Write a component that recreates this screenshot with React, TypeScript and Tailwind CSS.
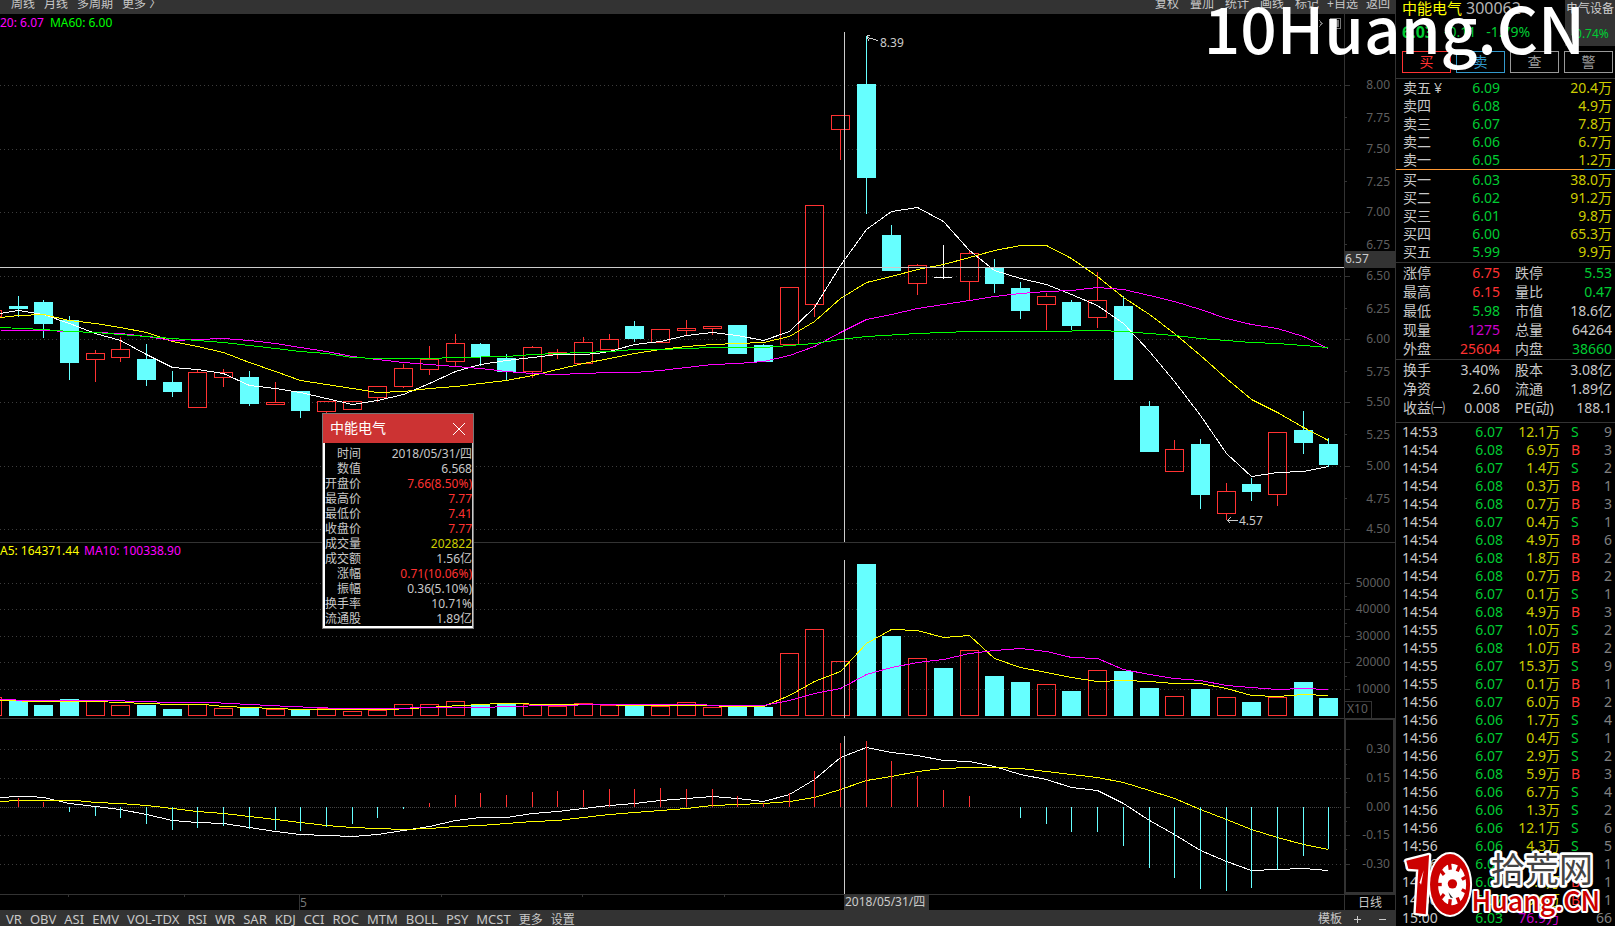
import React from "react";

type Tone = "white" | "green" | "red" | "yellow" | "magenta" | "gray";

const toneClass: Record<Tone, string> = {
  white: "text-[#c8c8c8]",
  green: "text-[#00cc33]",
  red: "text-[#ff3232]",
  yellow: "text-[#cccc00]",
  magenta: "text-[#cc00cc]",
  gray: "text-[#808080]",
};

const UP = "#ff3232";
const DOWN = "#66ffff";
const LINE = "#333333";
const CROSS = "#cccccc";

/* Horizontal centre of every trading day. */
const days = [
  18, 43, 69, 95, 120, 146, 172, 197, 223, 249, 275, 300, 326, 352, 377, 403, 429, 455, 480, 506, 532, 557, 583, 609,
  634, 660, 686, 712, 737, 763, 789, 814, 840, 866, 891, 917, 943, 969, 994, 1020, 1046, 1071, 1097, 1123, 1149, 1174,
  1200, 1226, 1251, 1277, 1303, 1328,
];

/* direction, wick top, body top, body bottom, wick bottom, volume top, histogram end */
type Day = ["u" | "d" | "n", number, number, number, number, number, number];
const data: Day[] = [
  ["d", 296, 306, 309, 317, 700, 798],
  ["d", 300, 302, 324, 338, 705, 802],
  ["d", 316, 320, 363, 380, 699, 812],
  ["u", 350, 353, 360, 382, 701, 816],
  ["u", 337, 349, 358, 362, 705, 818],
  ["d", 344, 359, 380, 386, 705, 824],
  ["d", 371, 382, 392, 397, 709, 830],
  ["u", 370, 372, 408, 408, 704, 828],
  ["u", 369, 372, 378, 387, 708, 826],
  ["d", 371, 377, 404, 406, 707, 829],
  ["u", 382, 402, 405, 405, 709, 830],
  ["d", 391, 391, 411, 418, 710, 831],
  ["u", 401, 401, 412, 413, 708, 827],
  ["u", 401, 401, 410, 410, 711, 824],
  ["u", 386, 386, 398, 402, 710, 818],
  ["u", 364, 368, 387, 388, 704, 809],
  ["u", 346, 359, 370, 375, 704, 803],
  ["u", 334, 343, 362, 366, 701, 795],
  ["d", 343, 344, 357, 366, 705, 793],
  ["d", 354, 358, 372, 380, 704, 795],
  ["u", 346, 347, 372, 378, 704, 792],
  ["u", 349, 352, 355, 359, 706, 791],
  ["u", 337, 342, 364, 364, 703, 790],
  ["u", 334, 339, 350, 350, 705, 789],
  ["d", 321, 326, 339, 342, 705, 789],
  ["u", 329, 329, 343, 343, 706, 788],
  ["u", 320, 328, 331, 335, 702, 789],
  ["u", 326, 326, 329, 335, 707, 789],
  ["d", 325, 325, 354, 354, 707, 796],
  ["d", 344, 345, 362, 362, 707, 803],
  ["u", 287, 287, 345, 345, 653, 793],
  ["u", 205, 205, 305, 317, 629, 771],
  ["u", 115, 115, 130, 160, 661, 743],
  ["d", 36, 84, 178, 214, 564, 741],
  ["d", 225, 235, 271, 271, 636, 761],
  ["u", 264, 265, 284, 295, 658, 776],
  ["n", 245, 277, 278, 279, 668, 790],
  ["u", 250, 253, 282, 300, 650, 796],
  ["d", 259, 267, 284, 293, 676, 807],
  ["d", 282, 288, 311, 319, 682, 818],
  ["u", 293, 296, 305, 330, 684, 824],
  ["d", 300, 302, 326, 330, 691, 832],
  ["u", 272, 300, 318, 328, 670, 832],
  ["d", 296, 306, 380, 380, 671, 846],
  ["d", 401, 406, 452, 452, 688, 868],
  ["u", 440, 449, 472, 472, 696, 878],
  ["d", 439, 444, 495, 509, 689, 889],
  ["u", 483, 491, 514, 520, 697, 891],
  ["d", 478, 484, 492, 501, 702, 888],
  ["u", 432, 432, 495, 506, 697, 870],
  ["d", 411, 430, 443, 454, 682, 856],
  ["d", 438, 444, 465, 467, 698, 849],
];

const ma5 =
  "0,313 18,310 43,314 69,323 95,333 120,340 146,354 172,367 197,369 223,373 249,385 275,388 300,392 326,398 352,404 377,400 403,394 429,383 455,371 480,364 506,360 532,357 557,354 583,354 596,353 609,351 634,344 660,341 686,335 712,332 737,335 763,340 789,331 814,307 840,265 866,229 891,211 917,207 943,221 969,250 994,270 1020,278 1046,284 1071,294 1097,305 1123,323 1149,351 1174,381 1200,415 1226,453 1251,476 1277,472 1303,471 1328,466";
const ma10 =
  "0,317 18,315 43,314 69,320 95,323 120,327 146,332 172,341 197,346 223,352 249,362 275,371 300,380 326,384 352,388 377,392 403,391 429,388 455,386 480,383 506,380 532,375 557,369 583,363 609,358 634,353 660,349 686,346 712,344 737,343 763,342 789,336 814,321 840,298 866,282 891,276 917,269 943,264 969,257 994,250 1020,245 1046,245 1071,258 1097,276 1123,297 1149,314 1174,333 1200,355 1226,378 1251,399 1277,412 1303,427 1328,440";
const ma20 =
  "0,330 43,330 69,331 95,332 120,333 146,336 172,340 197,339 223,338 249,340 275,343 300,347 326,351 352,356 377,359 403,362 429,364 455,366 480,368 506,371 532,373 557,374 583,373 609,372 634,372 660,370 686,367 712,364 737,363 763,361 789,355 814,346 840,332 866,319 891,314 917,308 943,304 969,300 994,296 1020,293 1046,291 1071,290 1097,287 1123,289 1149,295 1174,301 1200,309 1226,318 1251,324 1277,328 1303,336 1328,348";
const ma60 =
  "0,327 43,329 69,331 95,332 120,334 146,336 172,338 197,340 223,342 249,345 275,348 300,351 326,353 352,357 377,358 429,358 455,357 506,356 532,354 557,353 583,352 609,351 634,349 660,349 686,348 712,347 763,347 789,345 814,343 840,339 866,336 917,333 969,331 1046,331 1097,330 1123,331 1149,333 1174,335 1200,338 1226,340 1251,342 1277,343 1303,345 1328,347";
const vol5 =
  "0,700 43,701 95,701 146,703 172,704 204,704 223,706 249,707 300,709 389,709 429,707 442,706 480,704 500,703 557,704 596,704 634,705 700,705 737,706 763,706 789,695 814,681 840,671 866,643 891,629 917,630 943,637 969,635 994,658 1020,667 1046,672 1071,677 1097,681 1123,680 1149,681 1174,683 1200,683 1226,688 1251,695 1277,696 1303,694 1328,695";
const vol10 =
  "0,699 31,700 108,700 172,702 211,702 249,704 290,706 340,708 403,708 416,707 490,707 500,706 557,705 600,704 700,704 712,705 763,705 789,700 814,693 840,688 866,674 891,667 917,662 943,659 969,653 994,650 1020,648 1046,651 1071,657 1097,658 1123,669 1149,674 1174,678 1200,680 1226,685 1251,687 1277,689 1303,688 1328,689";
const dif =
  "0,797 18,796 30,796 43,797 69,803 95,806 120,809 146,814 172,820 197,822 223,823 249,827 275,831 300,834 326,835 352,836 377,834 403,830 429,826 455,820 480,817 506,817 532,813 557,811 583,808 609,805 634,803 660,800 686,798 712,796 737,798 763,801 789,794 814,779 840,757 866,747 891,752 917,755 943,760 969,761 994,766 1020,774 1046,779 1071,787 1097,790 1123,803 1149,820 1174,834 1200,850 1226,861 1251,870 1277,869 1303,868 1328,870";
const dea =
  "0,801 18,800 75,800 95,802 120,803 146,805 172,808 197,811 223,813 249,816 275,819 300,822 326,825 352,827 377,828 403,829 429,828 455,826 480,825 506,823 532,821 557,820 583,817 609,814 634,812 660,810 686,808 712,805 737,804 763,803 789,801 814,797 840,789 866,780 891,776 917,771 943,768 969,767 994,767 1020,768 1046,771 1071,774 1097,777 1123,782 1149,790 1174,798 1200,809 1226,819 1251,829 1277,837 1303,844 1328,849";

function Grid({ ys }: { ys: number[] }) {
  return (
    <>
      {ys.map((y) => (
        <line key={y} x1={0} x2={1342} y1={y + 0.5} y2={y + 0.5} stroke="#3c3c3c" strokeDasharray="1 3" />
      ))}
    </>
  );
}

function Curve({ points, color }: { points: string; color: string }) {
  return <polyline points={points} transform="translate(.5 .5)" fill="none" stroke={color} strokeWidth={1} />;
}

type ScaleLabel = [number, string];

function Axis({
  top,
  height,
  className,
  label,
  majors,
  minors,
  children,
}: {
  top: number;
  height: number;
  className: string;
  label: ScaleLabel[];
  majors: number[];
  minors: number[];
  children?: React.ReactNode;
}) {
  return (
    <svg
      className={`w-[51px] shrink-0 ${className}`}
      viewBox={`0 ${top} 51 ${height}`}
      preserveAspectRatio="xMinYMin slice"
      shapeRendering="crispEdges"
    >
      <rect x={0} y={top} width={1} height={height} fill={LINE} />
      {majors.map((y) => (
        <rect key={y} x={1} y={y} width={5} height={1} fill={LINE} />
      ))}
      {minors.map((y) => (
        <rect key={y} x={1} y={y} width={2} height={1} fill={LINE} />
      ))}
      {label.map(([y, t]) => (
        <text key={t} x={46} y={y + 4} textAnchor="end" fontSize={12} fill="#5f5f5f">
          {t}
        </text>
      ))}
      {children}
    </svg>
  );
}

function PriceChart() {
  return (
    <svg
      className="block h-[528px] min-w-0 flex-1"
      viewBox="0 14 1344 528"
      preserveAspectRatio="xMaxYMin slice"
      shapeRendering="crispEdges"
    >
      <Grid ys={[85, 149, 212, 276, 339, 402, 466, 529]} />
      <rect x={-8.5} y={310.5} width={10} height={6} fill="none" stroke={UP} />
      {data.map(([dir, hi, top, bottom, lo], i) => {
        const x = days[i];
        if (dir === "d")
          return (
            <g key={x} fill={DOWN}>
              <rect x={x} y={hi} width={1} height={lo - hi} />
              <rect x={x - 9} y={top} width={19} height={bottom - top} />
            </g>
          );
        if (dir === "n")
          return (
            <g key={x} fill="#ffffff">
              <rect x={x} y={hi} width={1} height={lo - hi} />
              <rect x={x - 9} y={top} width={18} height={1} />
            </g>
          );
        return (
          <g key={x} fill={UP}>
            <rect x={x} y={hi} width={1} height={top - hi} />
            <rect x={x} y={bottom} width={1} height={lo - bottom} />
            <rect x={x - 8.5} y={top + 0.5} width={18} height={bottom - top - 1} fill="none" stroke={UP} />
          </g>
        );
      })}
      <Curve points={ma5} color="#ffffff" />
      <Curve points={ma10} color="#ffff00" />
      <Curve points={ma20} color="#ff00ff" />
      <Curve points={ma60} color="#00ff00" />
      <rect x={0} y={267} width={1344} height={1} fill={CROSS} />
      <rect x={844} y={32} width={1} height={510} fill={CROSS} />
      <path d="M878 40.500L867.500 37.500M870 35.500H867.500V38.500L869 40.500" fill="none" stroke={CROSS} />
      <path d="M1238 520.500H1227M1230.500 517.500L1227.500 520.500L1230.500 523.500" fill="none" stroke={CROSS} />
      <g fontSize={12} fill="#cccccc">
        <text x={880} y={47}>
          8.39
        </text>
        <text x={1239} y={525}>
          4.57
        </text>
      </g>
      <g fill="none" stroke="#777777">
        <path d="M1330.500 18.500h10v10h-10z" />
        <path d="M1319 20l3 3.500-3 3.500" />
        <path d="M1335.500 20.500h3v6h-3z" fill="#777777" />
      </g>
    </svg>
  );
}

function VolumeChart() {
  return (
    <svg
      className="block h-[175px] min-w-0 flex-1"
      viewBox="0 543 1344 175"
      preserveAspectRatio="xMaxYMin slice"
      shapeRendering="crispEdges"
    >
      <Grid ys={[583, 609, 636, 662, 689]} />
      <rect x={-8.5} y={697.5} width={10} height={18} fill="none" stroke={UP} />
      {data.map(([dir, , , , , v], i) =>
        dir === "u" ? (
          <rect key={i} x={days[i] - 8.5} y={v + 0.5} width={18} height={715 - v} fill="none" stroke={UP} />
        ) : (
          <rect key={i} x={days[i] - 9} y={v} width={19} height={716 - v} fill={DOWN} />
        ),
      )}
      <Curve points={vol5} color="#ffff00" />
      <Curve points={vol10} color="#ff00ff" />
      <rect x={844} y={560} width={1} height={158} fill={CROSS} />
    </svg>
  );
}

function MacdChart() {
  return (
    <svg
      className="block h-[175px] min-w-0 flex-1"
      viewBox="0 719 1344 175"
      preserveAspectRatio="xMaxYMin slice"
      shapeRendering="crispEdges"
    >
      <Grid ys={[749, 778, 835, 864]} />
      <line x1={0} x2={1342} y1={807.5} y2={807.5} stroke="#444444" strokeDasharray="1 1" />
      <Curve points={dif} color="#ffffff" />
      <Curve points={dea} color="#ffff00" />
      {data.map(([, , , , , , h], i) => (
        <rect
          key={i}
          x={days[i]}
          y={Math.min(h, 807)}
          width={1}
          height={Math.abs(h - 807)}
          fill={h < 807 ? UP : DOWN}
        />
      ))}
      <rect x={844} y={736} width={1} height={158} fill={CROSS} />
    </svg>
  );
}

const quoteRows: [string, string, Tone][] = [
  ["时间", "2018/05/31/四", "white"],
  ["数值", "6.568", "white"],
  ["开盘价", "7.66(8.50%)", "red"],
  ["最高价", "7.77", "red"],
  ["最低价", "7.41", "red"],
  ["收盘价", "7.77", "red"],
  ["成交量", "202822", "yellow"],
  ["成交额", "1.56亿", "white"],
  ["涨幅", "0.71(10.06%)", "red"],
  ["振幅", "0.36(5.10%)", "white"],
  ["换手率", "10.71%", "white"],
  ["流通股", "1.89亿", "white"],
];

function DayPopup() {
  return (
    <section
      aria-label="中能电气"
      className="absolute top-[413px] left-[322px] z-10 w-[152px] border border-[#777777] bg-black"
    >
      <header className="flex h-[29px] items-center justify-between bg-[#cc3333] pr-2 pl-[7px] text-sm leading-7 text-white">
        <h2 className="-mt-px">中能电气</h2>
        <button aria-label="关闭" className="block">
          <svg className="block size-3" viewBox="0 0 12 12" stroke="#ffffff" fill="none">
            <path d="M0 0L12 12M12 0L0 12" />
          </svg>
        </button>
      </header>
      <div className="border-r border-b-2 border-l-2 border-r-[#cccccc] border-b-white border-l-white pt-[3px]">
        <table className="w-full table-fixed border-collapse text-xs leading-[15px]">
          <tbody>
            {quoteRows.map(([k, v, tone]) => (
              <tr key={k} className="h-[15px]">
                <th className="w-9 p-0 text-right font-normal whitespace-nowrap text-[#c8c8c8]">{k}</th>
                <td className={`p-0 text-right ${toneClass[tone]}`}>{v}</td>
              </tr>
            ))}
          </tbody>
        </table>
      </div>
    </section>
  );
}

const asks = [
  ["卖五", "6.09", "20.4万"],
  ["卖四", "6.08", "4.9万"],
  ["卖三", "6.07", "7.8万"],
  ["卖二", "6.06", "6.7万"],
  ["卖一", "6.05", "1.2万"],
];
const bids = [
  ["买一", "6.03", "38.0万"],
  ["买二", "6.02", "91.2万"],
  ["买三", "6.01", "9.8万"],
  ["买四", "6.00", "65.3万"],
  ["买五", "5.99", "9.9万"],
];

function Ladder({ rows, marked }: { rows: string[][]; marked?: string }) {
  return (
    <table className="w-full table-fixed border-collapse">
      <tbody>
        {rows.map(([k, p, v]) => (
          <tr key={k} className="h-[18px] leading-[18px]">
            <th className="w-[58px] p-0 pl-[7px] text-left font-normal whitespace-nowrap text-[#c8c8c8]">
              {k}
              {k === marked && <span className="ml-[3px]">¥</span>}
            </th>
            <td className="w-[46px] p-0 text-right text-[#00cc33]">{p}</td>
            <td className="p-0 pr-[3px] text-right text-[#cccc00]">{v}</td>
          </tr>
        ))}
      </tbody>
    </table>
  );
}

type StatRow = [string, string, Tone, string, string, Tone];
const statsA: StatRow[] = [
  ["涨停", "6.75", "red", "跌停", "5.53", "green"],
  ["最高", "6.15", "red", "量比", "0.47", "green"],
  ["最低", "5.98", "green", "市值", "18.6亿", "white"],
  ["现量", "1275", "magenta", "总量", "64264", "white"],
  ["外盘", "25604", "red", "内盘", "38660", "green"],
];
const statsB: StatRow[] = [
  ["换手", "3.40%", "white", "股本", "3.08亿", "white"],
  ["净资", "2.60", "white", "流通", "1.89亿", "white"],
  ["收益㈠", "0.008", "white", "PE(动)", "188.1", "white"],
];

function Stats({ rows }: { rows: StatRow[] }) {
  return (
    <table className="w-full table-fixed border-collapse">
      <tbody>
        {rows.map(([a, av, at, b, bv, bt]) => (
          <tr key={a} className="h-[19px] leading-[19px]">
            <th className="w-[52px] p-0 pl-[7px] text-left font-normal whitespace-nowrap text-[#c8c8c8]">{a}</th>
            <td className={`w-[52px] p-0 text-right ${toneClass[at]}`}>{av}</td>
            <th className="w-[58px] p-0 pl-[15px] text-left font-normal whitespace-nowrap text-[#c8c8c8]">{b}</th>
            <td className={`p-0 pr-[3px] text-right ${toneClass[bt]}`}>{bv}</td>
          </tr>
        ))}
      </tbody>
    </table>
  );
}

const ticks: [string, string, string, string, string][] = [
  ["14:53", "6.07", "12.1万", "S", "9"],
  ["14:54", "6.08", "6.9万", "B", "3"],
  ["14:54", "6.07", "1.4万", "S", "2"],
  ["14:54", "6.08", "0.3万", "B", "1"],
  ["14:54", "6.08", "0.7万", "B", "3"],
  ["14:54", "6.07", "0.4万", "S", "1"],
  ["14:54", "6.08", "4.9万", "B", "6"],
  ["14:54", "6.08", "1.8万", "B", "2"],
  ["14:54", "6.08", "0.7万", "B", "2"],
  ["14:54", "6.07", "0.1万", "S", "1"],
  ["14:54", "6.08", "4.9万", "B", "3"],
  ["14:55", "6.07", "1.0万", "S", "2"],
  ["14:55", "6.08", "1.0万", "B", "2"],
  ["14:55", "6.07", "15.3万", "S", "9"],
  ["14:55", "6.07", "0.1万", "B", "1"],
  ["14:56", "6.07", "6.0万", "B", "2"],
  ["14:56", "6.06", "1.7万", "S", "4"],
  ["14:56", "6.07", "0.4万", "S", "1"],
  ["14:56", "6.07", "2.9万", "S", "2"],
  ["14:56", "6.08", "5.9万", "B", "3"],
  ["14:56", "6.06", "6.7万", "S", "4"],
  ["14:56", "6.06", "1.3万", "S", "2"],
  ["14:56", "6.06", "12.1万", "S", "6"],
  ["14:56", "6.06", "4.3万", "S", "5"],
  ["14:56", "6.06", "0.6万", "S", "1"],
  ["14:56", "6.07", "1.2万", "B", "1"],
  ["14:56", "6.07", "0.6万", "B", "1"],
  ["15:00", "6.03", "76.9万", "", "66"],
];

function Ticks() {
  return (
    <table className="w-full table-fixed border-collapse">
      <tbody>
        {ticks.map(([t, p, v, side, n], i) => (
          <tr key={i} className="h-[18px] leading-[18px]">
            <td className="w-[52px] p-0 pl-[6px] text-[#c8c8c8]">{t}</td>
            <td className="w-[55px] p-0 text-right text-[#00cc33]">{p}</td>
            <td className={`w-[57px] p-0 text-right ${side ? "text-[#cccc00]" : "text-[#cc00cc]"}`}>{v}</td>
            <td className={`w-6 p-0 pl-[11px] ${side === "B" ? "text-[#ff3232]" : "text-[#00cc33]"}`}>{side}</td>
            <td className="p-0 pr-[3px] text-right text-[#808080]">{n}</td>
          </tr>
        ))}
      </tbody>
    </table>
  );
}

const actions = [
  ["买", "border-[#ff3232] text-[#ff3232]"],
  ["卖", "border-[#3399cc] text-[#3399cc]"],
  ["查", "border-[#999999] text-[#999999]"],
  ["警", "border-[#999999] text-[#999999]"],
];

function SidePanel() {
  return (
    <aside className="w-[220px] shrink-0 overflow-hidden border-l border-[#333333] text-sm">
      <div className="flex h-[51px] justify-between">
        <div className="flex flex-col pl-[6px]">
          <div className="flex h-[15px] items-center gap-1 leading-4 whitespace-nowrap">
            <h1 className="text-[15px] text-[#ffff00]">中能电气</h1>
            <span className="text-base leading-4 text-[#b4b4b4]">300062</span>
          </div>
          <div className="mt-2 flex items-center gap-[10px] leading-[18px] text-[#00cc33]">
            <b className="text-base leading-[18px]">6.03</b>
            <span>-0.11</span>
            <span>-1.79%</span>
          </div>
        </div>
        <div className="flex h-[46px] w-[50px] flex-col items-center gap-[9px] bg-[#333333] pt-px text-xs whitespace-nowrap">
          <span className="leading-4 text-[#cccccc]">电气设备</span>
          <span className="leading-4 text-[#00cc33]">-0.74%</span>
        </div>
      </div>
      <div className="flex h-[27px] justify-between pr-[2px] pl-[6px]">
        {actions.map(([t, c]) => (
          <button key={t} className={`h-[22px] w-[49px] border text-sm leading-5 ${c}`}>
            {t}
          </button>
        ))}
      </div>
      <div className="border-t border-[#333333]">
        <Ladder rows={asks} marked="卖五" />
      </div>
      <div className="flex h-px">
        <div className="flex-[6] bg-[#ff9933]" />
        <div className="flex-1 bg-[#3399cc]" />
      </div>
      <div className="pt-px pb-px">
        <Ladder rows={bids} />
      </div>
      <div className="border-t border-[#333333] pb-px">
        <Stats rows={statsA} />
      </div>
      <div className="border-t border-[#333333] pb-[5px]">
        <Stats rows={statsB} />
      </div>
      <div className="border-t border-[#333333]">
        <Ticks />
      </div>
    </aside>
  );
}

function ReelLogo() {
  const teeth = [20, 60, 100, 140, 180, 220, 260, 300, 340];
  return (
    <svg className="absolute right-[10px] bottom-[6px] z-20 h-[72px] w-[202px]" viewBox="40 505 605 215">
      <g strokeLinejoin="round">
        <path
          d="M50 540L118 523L108 700L78 696L86 566L56 564Z"
          fill="#cc0000"
          stroke="#ffffff"
          strokeWidth={14}
          paintOrder="stroke"
        />
        <path d="M102 568L94 612L90 604Z" fill="#ffffff" />
        <ellipse cx={181} cy={611} rx={60} ry={91} fill="#cc0000" stroke="#ffffff" strokeWidth={12} paintOrder="stroke" />
        <ellipse cx={187} cy={611} rx={42} ry={62} fill="#ffffff" />
        {teeth.map((a) => {
          const r = (a * Math.PI) / 180;
          return (
            <line
              key={a}
              x1={187 + Math.cos(r) * 44}
              y1={611 + Math.sin(r) * 64}
              x2={187 + Math.cos(r) * 31}
              y2={611 + Math.sin(r) * 45}
              stroke="#cc0000"
              strokeWidth={10}
            />
          );
        })}
        <circle cx={188} cy={609} r={14} fill="#cc0000" />
        <path d="M176 634l14 18-8-2z" fill="#222222" />
      </g>
      <g paintOrder="stroke" stroke="#ffffff" strokeLinejoin="round">
        <text x={303} y={604} fontSize={102} fill="#444444" strokeWidth={16}>
          拾荒网
        </text>
        <text x={245} y={690} fontSize={80} fontWeight={500} fill="#cc0000" strokeWidth={12} fontFamily="Noto Sans CJK SC">
          Huang.CN
        </text>
      </g>
    </svg>
  );
}

const periods = ["周线", "月线", "多周期"];
const tools = ["复权", "叠加", "统计", "画线", "标记"];
const indicators = [
  "VR", "OBV", "ASI", "EMV", "VOL-TDX", "RSI", "WR", "SAR", "KDJ", "CCI", "ROC", "MTM", "BOLL", "PSY", "MCST",
];

export default function App() {
  return (
    <div className="relative flex min-h-screen overflow-hidden bg-black font-['Noto_Sans','Noto_Sans_CJK_SC',sans-serif] text-[#c8c8c8]">
      <main className="relative flex min-w-0 flex-1 flex-col">
        <nav className="flex h-[14px] justify-between overflow-hidden bg-[#333333] pr-[5px] pl-[11px] text-xs leading-4 whitespace-nowrap">
          <div className="-mt-1 flex gap-[9px]">
            {periods.map((t) => (
              <button key={t} className="h-4">
                {t}
              </button>
            ))}
            <button className="h-4">更多 〉</button>
          </div>
          <div className="-mt-1 flex gap-[11px]">
            {tools.map((t) => (
              <button key={t} className="h-4">
                {t}
              </button>
            ))}
            <button className="-mx-[3px] h-4">+自选</button>
            <button className="h-4">返回</button>
          </div>
        </nav>

        <section className="relative flex border-b border-[#333333]">
          <p className="absolute top-0 left-0 flex gap-[6px] text-xs leading-[18px]">
            <span className="text-[#ff00ff]">20: 6.07</span>
            <span className="text-[#00ff00]">MA60: 6.00</span>
          </p>
          <PriceChart />
          <Axis
            top={14}
            height={528}
            className="h-[528px]"
            majors={[85, 149, 212, 276, 339, 402, 466, 529]}
            minors={[117, 181, 244, 308, 371, 434, 498]}
            label={[
              [85, "8.00"], [118, "7.75"], [149, "7.50"], [182, "7.25"], [212, "7.00"], [245, "6.75"], [276, "6.50"],
              [309, "6.25"], [339, "6.00"], [372, "5.75"], [402, "5.50"], [435, "5.25"], [466, "5.00"], [499, "4.75"],
              [529, "4.50"],
            ]}
          >
            <rect x={1} y={251} width={50} height={17} fill={LINE} />
            <text x={1} y={263} fontSize={12} fill="#cccccc">
              6.57
            </text>
          </Axis>
        </section>

        <section className="relative flex border-b border-[#333333]">
          <p className="absolute top-0 left-0 flex gap-[5px] text-xs leading-4">
            <span className="text-[#ffff00]">A5: 164371.44</span>
            <span className="text-[#ff00ff]">MA10: 100338.90</span>
          </p>
          <VolumeChart />
          <Axis
            top={543}
            height={175}
            className="h-[175px]"
            majors={[583, 609, 636, 662, 689]}
            minors={[596, 623, 649, 676]}
            label={[
              [583, "50000"], [609, "40000"], [636, "30000"], [662, "20000"], [689, "10000"],
            ]}
          >
            <path d="M0 701.500H27.500V718" fill="none" stroke={LINE} />
            <text x={3} y={713} fontSize={12} fill="#5f5f5f">
              X10
            </text>
          </Axis>
        </section>

        <section className="flex border-b border-[#333333]">
          <MacdChart />
          <Axis
            top={719}
            height={175}
            className="h-[175px]"
            majors={[749, 778, 807, 835, 864]}
            minors={[764, 792, 821, 849]}
            label={[
              [749, "0.30"], [778, "0.15"], [807, "0.00"], [835, "-0.15"], [864, "-0.30"],
            ]}
          >
            <rect x={1} y={719} width={49} height={174} fill="none" stroke={LINE} strokeWidth={2} />
          </Axis>
        </section>

        <section className="flex h-[15px]">
          <svg
            className="block h-[15px] min-w-0 flex-1"
            viewBox="0 895 1344 15"
            preserveAspectRatio="xMaxYMin slice"
            shapeRendering="crispEdges"
          >
            {[68, 184, 441, 582, 724].map((x) => (
              <rect key={x} x={x} y={895} width={1} height={2} fill={LINE} />
            ))}
            <rect x={299} y={895} width={1} height={15} fill={LINE} />
            <text x={300} y={907} fontSize={12} fill="#777777">
              5
            </text>
            <rect x={844} y={895} width={85} height={15} fill={LINE} />
            <text x={845} y={906} fontSize={12} fill="#cccccc">
              2018/05/31/四
            </text>
          </svg>
          <div className="w-[51px] border-l border-[#333333] text-center text-xs leading-[15px]">日线</div>
        </section>

        <nav className="flex h-4 items-start justify-between bg-[#333333] pt-px pr-[9px] pl-[6px] text-xs leading-4 whitespace-nowrap">
          <div className="flex items-baseline gap-2">
            {indicators.map((t) => (
              <button key={t} className="text-[13px] leading-4">
                {t}
              </button>
            ))}
            <button className="leading-4">更多</button>
            <button className="leading-4">设置</button>
          </div>
          <div className="flex items-center gap-3">
            <button className="leading-4">模板</button>
            <button aria-label="放大" className="flex h-4 items-center">
              <svg className="size-[7px]" viewBox="0 0 7 7" stroke="#cccccc" shapeRendering="crispEdges">
                <path d="M0 3.500H7M3.500 0V7" />
              </svg>
            </button>
            <button aria-label="缩小" className="ml-[6px] flex h-4 items-center">
              <svg className="size-[7px]" viewBox="0 0 7 7" stroke="#cccccc" shapeRendering="crispEdges">
                <path d="M0 3.500H7" />
              </svg>
            </button>
          </div>
        </nav>

        <DayPopup />
      </main>

      <SidePanel />

      <div className="absolute top-0 right-[30px] z-20 font-['Noto_Sans_CJK_SC',sans-serif] text-[64px] leading-[52px] font-medium text-white">
        10Huang.CN
      </div>
      <ReelLogo />
    </div>
  );
}
